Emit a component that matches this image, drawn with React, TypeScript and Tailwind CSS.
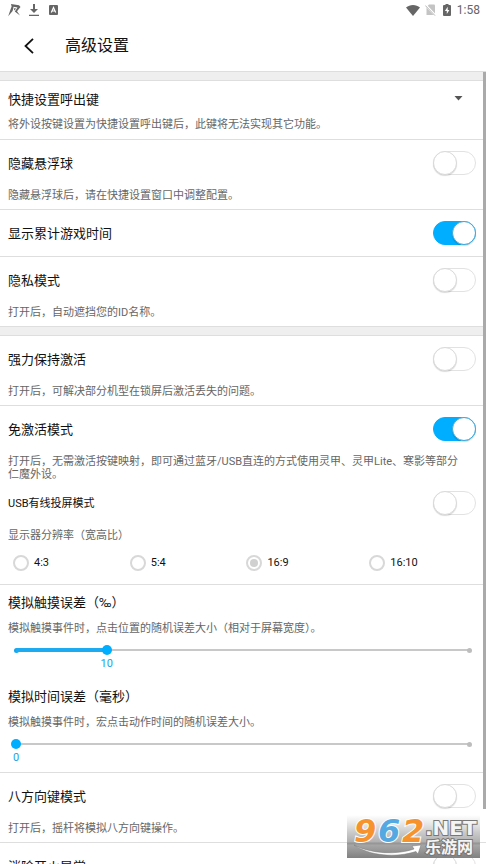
import { useState } from 'react'

interface SwitchProps {
  id: string
  defaultChecked?: boolean
}

function Switch({ id, defaultChecked = false }: SwitchProps) {
  return (
    <input
      id={id}
      type="checkbox"
      role="switch"
      defaultChecked={defaultChecked}
      className="relative h-6 w-[43px] shrink-0 appearance-none rounded-full border border-[#e2e2e2] bg-white before:absolute before:-top-px before:-left-px before:h-6 before:w-6 before:rounded-full before:border before:border-[#dadada] before:bg-white before:shadow-[0_1px_1px_rgba(0,0,0,0.15)] checked:border-[#00aeff] checked:bg-[#00aeff] checked:before:left-[18px] checked:before:border-[#3fa9dc]"
    />
  )
}

interface SwitchRowProps extends SwitchProps {
  title: string
  description?: string
}

function SwitchRow({ id, title, description, defaultChecked }: SwitchRowProps) {
  return (
    <section className={description ? 'border-b border-[#dedede] px-2 pt-[11px] pb-[7px]' : 'border-b border-[#dedede] px-2 py-[11px]'}>
      <div className="flex items-center justify-between pr-0.5">
        <label htmlFor={id} className="pt-0.5 text-[13px] leading-5">
          {title}
        </label>
        <Switch id={id} defaultChecked={defaultChecked} />
      </div>
      {description && <p className="mt-3.5 text-[11px] leading-[13px] text-[#666]">{description}</p>}
    </section>
  )
}

function Divider() {
  return <div className="h-[9px] border-b border-[#dedede] bg-[#efefef]" />
}

interface SliderProps {
  id: string
  title: string
  description: string
  initial: number
}

function Slider({ id, title, description, initial }: SliderProps) {
  const [value, setValue] = useState(initial)
  const percent = `${(value / 50) * 100}%`

  return (
    <div>
      <label htmlFor={id} className="block text-[13px] leading-5">
        {title}
      </label>
      <p className="mt-[9px] text-[11px] leading-[13px] text-[#666]">{description}</p>
      <div className="relative mt-2 mr-2 ml-2 pb-[13px]">
        <div className="flex h-3.5 items-center">
          <div className="h-0.5 w-full bg-[#c8c8c8]" />
        </div>
        <span className="absolute top-[5px] -right-0.5 h-[5px] w-[5px] rounded-full bg-[#bdbdbd]" />
        <span className="absolute top-[5px] -left-0.5 h-[5px] w-[5px] rounded-full bg-[#12a5ee]" />
        <span className="absolute top-[5px] left-0 h-1 bg-[#1eaaf0]" style={{ width: percent }} />
        <span className="absolute top-0.5 -ml-[5px] h-2.5 w-2.5 rounded-full bg-[#00aeff]" style={{ left: percent }} />
        <output
          htmlFor={id}
          className="absolute top-3.5 w-6 -translate-x-1/2 text-center text-[11px] leading-[13px] text-[#1ba3e6]"
          style={{ left: percent }}
        >
          {value}
        </output>
        <input
          id={id}
          type="range"
          min={0}
          max={50}
          value={value}
          onChange={(e) => setValue(Number(e.target.value))}
          className="absolute inset-x-0 top-0 h-3.5 w-full opacity-0"
        />
      </div>
    </div>
  )
}

function StatusBar() {
  return (
    <div className="flex h-5 items-center justify-between pr-1.5 pl-2 text-[#666]">
      <div className="flex items-center">
        <svg width="13" height="14" viewBox="0 0 13 14" fill="currentColor">
          <path d="M3 1 11 2.2 12.5 4 9 8.3 12 12.5 6.8 8.4 9.5 4.6 5.6 3.8 4.6 8 .2 13.2 2.5 6.5 3.6 3.6Z" />
          <path d="M5.8 5.2 8.2 5.5 6.3 7.4Z" />
        </svg>
        <svg className="ml-2" width="10" height="12" viewBox="0 0 10 12" fill="currentColor">
          <path d="M4 0h2v5h3L5 9 1 5h3ZM0 10.8h10V12H0Z" />
        </svg>
        <svg className="ml-2.5" width="9" height="10" viewBox="0 0 9 10">
          <rect width="9" height="10" rx="1" fill="currentColor" />
          <path d="M2.3 7.5 4.5 2.5 6.7 7.5M3.1 6h2.8" fill="none" stroke="#fff" strokeWidth="1.2" />
        </svg>
      </div>
      <div className="flex items-center">
        <svg width="14" height="11" viewBox="0 0 14 11" fill="currentColor">
          <path d="M7 11 0 2.5C2 .9 4.4 0 7 0s5 .9 7 2.5Z" />
        </svg>
        <svg className="ml-[5px]" width="11" height="12" viewBox="0 0 11 12">
          <path d="M4 .5h5q1 0 1 1V11H1.5V3Z" fill="#c4c4c4" />
          <path d="M.5 1 10.5 11.5" stroke="#fff" strokeWidth="2.2" />
          <path d="M.3 1.5 10 11.6" stroke="#b5b5b5" strokeWidth="1" />
        </svg>
        <svg className="ml-[7px]" width="8" height="12" viewBox="0 0 8 12">
          <path d="M2.5 0h3v1H7q1 0 1 1v9q0 1-1 1H1q-1 0-1-1V2q0-1 1-1h1.5Z" fill="currentColor" />
          <path d="M4.7 2.8 1.9 7h1.9v3l2.6-4H4.7Z" fill="#fff" />
        </svg>
        <span className="ml-1.5 text-xs">1:58</span>
      </div>
    </div>
  )
}

function Watermark() {
  return (
    <svg className="absolute right-1.5 bottom-1.5 overflow-visible" width="133" height="43" viewBox="0 0 133 43">
      <defs>
        <linearGradient id="wm-bg" x1="0" y1="0" x2="0" y2="1">
          <stop offset="0" stopColor="#fff" stopOpacity="0.8" />
          <stop offset="0.4" stopColor="#c8c8c8" stopOpacity="0.95" />
          <stop offset="1" stopColor="#808080" />
        </linearGradient>
      </defs>
      <rect width="133" height="43" fill="url(#wm-bg)" />
      <path d="M0 28.5h133" stroke="#777" strokeOpacity="0.4" strokeWidth="2" />
      <g
        fontFamily="'DejaVu Sans', sans-serif"
        fontWeight="bold"
        fontStyle="italic"
        fontSize="32"
        stroke="#fff"
        strokeWidth="2"
        paintOrder="stroke"
      >
        <text x="7" y="27" fill="#f7932f">9</text>
        <text x="31" y="27" fill="#55a9e2">6</text>
        <text x="55" y="27" fill="#f7932f">2</text>
      </g>
      <path d="M7 30C24 39 50 40 67 34L65 31 74 30 71 39 69 36.5C49 43 23 41 7 30Z" fill="#fff" stroke="#777" strokeWidth="0.5" />
      <text
        x="78"
        y="20"
        fontFamily="'DejaVu Sans', sans-serif"
        fontWeight="bold"
        fontSize="20"
        fill="#f4f4f4"
        stroke="#777"
        strokeWidth="2"
        paintOrder="stroke"
      >
        .NET
      </text>
      <text
        x="78"
        y="38"
        fontFamily="'Noto Sans CJK SC', sans-serif"
        fontWeight="bold"
        fontSize="16"
        fill="#f4f4f4"
        stroke="#777"
        strokeWidth="2"
        paintOrder="stroke"
      >
        乐游网
      </text>
    </svg>
  )
}

const ratios = ['4:3', '5:4', '16:9', '16:10']

export default function App() {
  const [ratio, setRatio] = useState('16:9')

  return (
    <div className="relative flex h-screen flex-col overflow-hidden bg-white font-['Roboto','Noto_Sans_CJK_SC',sans-serif] text-[#111]">
      <StatusBar />
      <header className="flex h-[52px] shrink-0 items-center border-b border-[#dedede] pl-6">
        <button type="button" aria-label="返回" className="flex">
          <svg width="10" height="16" viewBox="0 0 10 16" fill="none" stroke="#111" strokeWidth="1.8">
            <path d="M9 .8 1.5 8 9 15.2" />
          </svg>
        </button>
        <h1 className="ml-[31px] text-base">高级设置</h1>
      </header>

      <div className="relative min-h-0 flex-1 overflow-hidden">
        <Divider />
        <section className="border-b border-[#dedede] px-2 py-2">
          <div className="relative flex h-5 items-center">
            <label htmlFor="hotkey" className="pt-0.5 text-[13px] leading-5">
              快捷设置呼出键
            </label>
            <select id="hotkey" className="h-5 flex-1 appearance-none bg-transparent">
              <option value="" />
            </select>
            <svg className="pointer-events-none absolute top-[7px] right-[15px]" width="9" height="5" viewBox="0 0 9 5">
              <path d="M.5 0h8l-4 4.5Z" fill="#555" />
            </svg>
          </div>
          <p className="mt-[9px] text-[11px] leading-[13px] text-[#666]">将外设按键设置为快捷设置呼出键后，此键将无法实现其它功能。</p>
        </section>
        <SwitchRow id="hide-ball" title="隐藏悬浮球" description="隐藏悬浮球后，请在快捷设置窗口中调整配置。" />
        <SwitchRow id="show-time" title="显示累计游戏时间" defaultChecked />
        <SwitchRow id="privacy" title="隐私模式" description="打开后，自动遮挡您的ID名称。" />
        <Divider />
        <SwitchRow id="keep-active" title="强力保持激活" description="打开后，可解决部分机型在锁屏后激活丢失的问题。" />

        <section className="border-b border-[#dedede] px-2 pt-[11px] pb-[13px]">
          <div className="flex items-center justify-between pr-0.5">
            <label htmlFor="no-activate" className="pt-0.5 text-[13px] leading-5">
              免激活模式
            </label>
            <Switch id="no-activate" defaultChecked />
          </div>
          <p className="mt-3.5 text-[11px] leading-[13px] text-[#666]">
            打开后，无需激活按键映射，即可通过蓝牙/USB直连的方式使用灵甲、灵甲Lite、寒影等部分
            <br />
            仁魔外设。
          </p>
          <div className="mt-2.5 flex items-center justify-between pr-0.5">
            <label htmlFor="usb-cast" className="pt-0.5 text-[11px] leading-5">
              USB有线投屏模式
            </label>
            <Switch id="usb-cast" />
          </div>
          <p className="mt-3.5 text-[11px] leading-[13px] text-[#666]">显示器分辨率（宽高比）</p>
          <div className="-mr-2 mt-[13px] grid grid-cols-[19fr_19fr_20fr_19fr] pl-[5px]">
            {ratios.map((item) => (
              <label key={item} className="flex h-4 items-center gap-[5px] text-[11px]">
                <input
                  type="radio"
                  name="ratio"
                  value={item}
                  checked={ratio === item}
                  onChange={() => setRatio(item)}
                  className="h-4 w-4 appearance-none rounded-full border-2 border-[#d8d8d8] bg-white bg-clip-content p-0.5 checked:bg-[#d0d0d0]"
                />
                {item}
              </label>
            ))}
          </div>
        </section>

        <section className="flex flex-col gap-[17px] border-b border-[#dedede] px-2 py-2">
          <Slider id="touch-error" title="模拟触摸误差（‰）" description="模拟触摸事件时，点击位置的随机误差大小（相对于屏幕宽度）。" initial={10} />
          <Slider id="time-error" title="模拟时间误差（毫秒）" description="模拟触摸事件时，宏点击动作时间的随机误差大小。" initial={0} />
        </section>

        <SwitchRow id="eight-way" title="八方向键模式" description="打开后，摇杆将模拟八方向键操作。" />
        <SwitchRow id="fire-fix" title="消除开火异常" />

        <div className="absolute top-0 right-0 h-[93%] w-[3px] bg-[#aaa]" />
      </div>
      <Watermark />
    </div>
  )
}
